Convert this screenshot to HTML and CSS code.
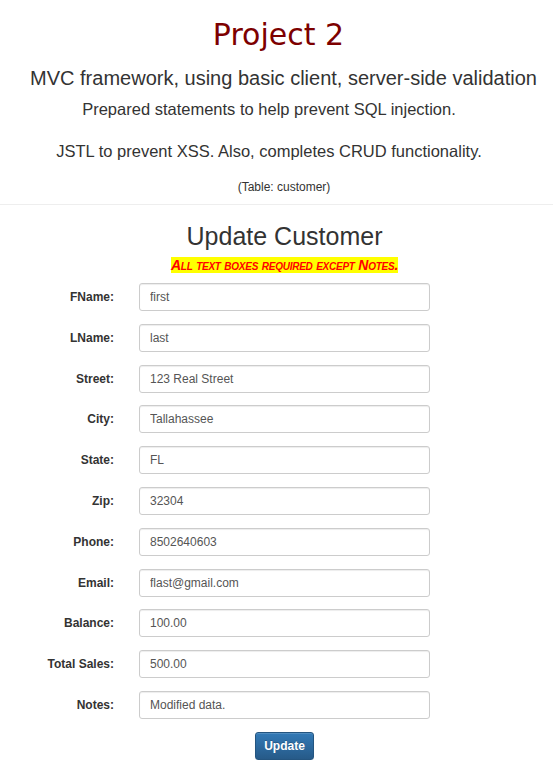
FILE: index.html
```html
<!DOCTYPE html>
<html lang="en">
<head>
<meta charset="utf-8">
<title>Project 2 - Update Customer</title>
<link rel="stylesheet" href="styles.css">
</head>
<body>
<header class="intro">
  <h1 class="title">Project 2</h1>
  <p class="lead-main">MVC framework, using basic client, server-side validation</p>
  <p class="lead-sub">Prepared statements to help prevent SQL injection.</p>
  <p class="lead-sub lead-jstl">JSTL to prevent XSS. Also, completes CRUD functionality.</p>
  <p class="table-note">(Table: customer)</p>
</header>
<hr class="divider">
<main class="content">
  <h2 class="form-title">Update Customer</h2>
  <p class="notice"><span class="notice-text">All text boxes required except Notes.</span></p>
  <form class="form-grid">
    <label class="field-label">FName:</label><input class="field-input" type="text" value="first">
    <label class="field-label">LName:</label><input class="field-input" type="text" value="last">
    <label class="field-label">Street:</label><input class="field-input" type="text" value="123 Real Street">
    <label class="field-label">City:</label><input class="field-input" type="text" value="Tallahassee">
    <label class="field-label">State:</label><input class="field-input" type="text" value="FL">
    <label class="field-label">Zip:</label><input class="field-input" type="text" value="32304">
    <label class="field-label">Phone:</label><input class="field-input" type="text" value="8502640603">
    <label class="field-label">Email:</label><input class="field-input" type="text" value="flast@gmail.com">
    <label class="field-label">Balance:</label><input class="field-input" type="text" value="100.00">
    <label class="field-label">Total Sales:</label><input class="field-input" type="text" value="500.00">
    <label class="field-label">Notes:</label><input class="field-input" type="text" value="Modified data.">
    <div class="actions"><button class="btn-update" type="button">Update</button></div>
  </form>
</main>
</body>
</html>
```
FILE: styles.css
```css
html, body {
  margin: 0;
  padding: 0;
  background: #fff;
}
body {
  font-family: "Liberation Sans", Arial, sans-serif;
  color: #333;
}
.intro {
  text-align: center;
  padding-top: 17px;
}
.title {
  margin: 0;
  padding-left: 4px;
  font-family: "DejaVu Sans", Verdana, sans-serif;
  font-weight: normal;
  font-size: 30px;
  line-height: 36px;
  color: #7d0000;
}
.lead-main {
  margin: 12px 0 0;
  padding-left: 14px;
  font-size: 20px;
  line-height: 26px;
}
.lead-sub {
  margin: 6px 0 0;
  padding-right: 15px;
  font-size: 16.5px;
  line-height: 24px;
}
.lead-jstl {
  margin-top: 18px;
}
.table-note {
  margin: 16px 0 0;
  padding-left: 15px;
  font-size: 12px;
  line-height: 16px;
}
.divider {
  margin: 9px 0 0;
  border: 0;
  border-top: 1px solid #eee;
  height: 0;
}
.content {
  display: flex;
  flex-direction: column;
  align-items: center;
  padding-left: 16px;
}
.form-title {
  margin: 16px 0 0;
  font-weight: normal;
  font-size: 25px;
  line-height: 30px;
  color: #333;
}
.notice {
  margin: 7px 0 0;
  font-size: 14px;
  line-height: 14px;
}
.notice-text {
  background: #ff0;
  color: #f00;
  font-weight: bold;
  font-style: italic;
  font-variant: small-caps;
  letter-spacing: -0.25px;
}
.form-grid {
  align-self: flex-start;
  margin-top: 11px;
  margin-left: -16px;
  display: grid;
  grid-template-columns: 114px 291px;
  column-gap: 25px;
  row-gap: 12.8px;
}
.field-label {
  text-align: right;
  font-weight: bold;
  font-size: 12px;
  line-height: 28px;
  height: 28px;
  color: #333;
}
.field-input {
  box-sizing: border-box;
  height: 28px;
  width: 291px;
  margin: 0;
  padding: 0 10px;
  font-family: "Liberation Sans", Arial, sans-serif;
  font-size: 12px;
  color: #555;
  border: 1px solid #ccc;
  border-radius: 3px;
  box-shadow: inset 0 1px 1px rgba(0,0,0,0.075);
  background: #fff;
}
.actions {
  grid-column: 2;
  margin-left: 116px;
}
.btn-update {
  box-sizing: border-box;
  width: 59px;
  height: 28px;
  padding: 0;
  font-family: "Liberation Sans", Arial, sans-serif;
  font-size: 12px;
  font-weight: bold;
  color: #fff;
  text-shadow: 0 -1px 0 rgba(0,0,0,0.2);
  background: linear-gradient(to bottom, #337ab7 0%, #265a88 100%);
  border: 1px solid #245580;
  border-radius: 3px;
  box-shadow: inset 0 1px 0 rgba(255,255,255,0.15), 0 1px 1px rgba(0,0,0,0.075);
}
```
